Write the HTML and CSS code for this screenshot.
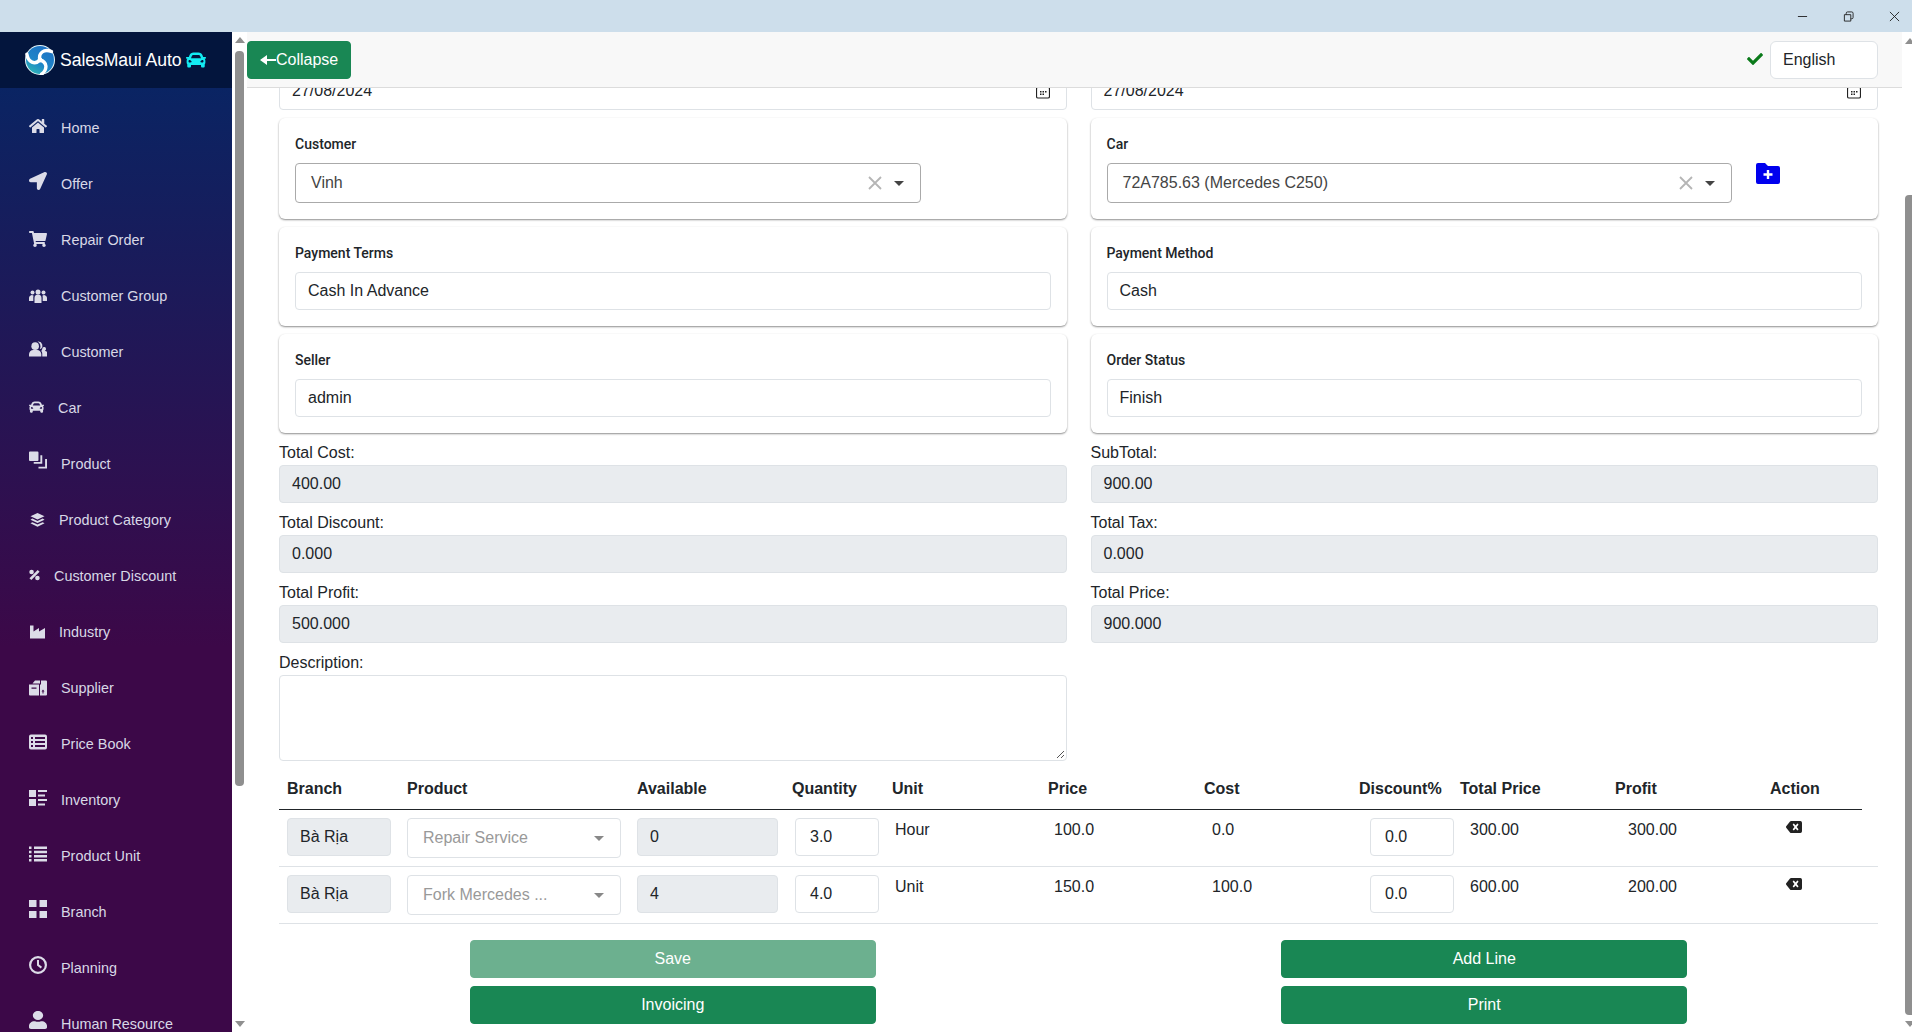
FILE: index.html
```html
<!DOCTYPE html>
<html lang="en">
<head>
<meta charset="utf-8">
<title>SalesMaui Auto</title>
<link rel="stylesheet" href="styles.css">
</head>
<body>
<div class="titlebar">
  <svg class="win-ic" viewBox="0 0 12 12"><path d="M1 6h10" /></svg>
  <svg class="win-ic" viewBox="0 0 12 12"><path d="M1.500 4h7v7h-7zM3.500 4V2.500a1.500 1.500 0 0 1 1.500-1.500h4.500a1.500 1.500 0 0 1 1.500 1.500V7a1.500 1.500 0 0 1-1.500 1.500H8.500"/></svg>
  <svg class="win-ic" viewBox="0 0 12 12"><path d="M1 1l10 10M11 1L1 11"/></svg>
</div>
<div class="app">
  <aside class="sidebar">
    <div class="brand">
      <svg class="logo" viewBox="0 0 30 30">
        <defs><linearGradient id="lg" x1="0.800" y1="0" x2="0.200" y2="1"><stop offset="0" stop-color="#1d6fc4"/><stop offset=".6" stop-color="#1f86c8"/><stop offset="1" stop-color="#2fb7b4"/></linearGradient></defs>
        <circle cx="15" cy="15" r="15" fill="#e6f4f8"/>
        <circle cx="15" cy="15" r="14" fill="url(#lg)"/>
        <g class="logo-arms">
          <path d="M15 15C13 8 19 3.500 26.500 6.500"/>
          <path d="M15 15C13 8 19 3.500 26.500 6.500" transform="rotate(120 15 15)"/>
          <path d="M15 15C13 8 19 3.500 26.500 6.500" transform="rotate(240 15 15)"/>
        </g>
        <circle cx="15" cy="15" r="2.400" fill="#fff"/>
      </svg>
      <span class="brand-name">SalesMaui Auto</span>
      <svg class="brand-car" viewBox="0 0 512 512"><path d="M499.990 176h-59.870l-16.640-41.600C406.380 91.630 365.570 64 319.500 64h-127c-46.060 0-86.880 27.630-103.990 70.400L71.870 176H12.010C4.200 176-1.530 183.340.37 190.910l6 24C7.700 220.250 12.500 224 18.010 224h20.070C24.650 235.730 16 252.780 16 272v48c0 16.120 6.160 30.670 16 41.930V416c0 17.670 14.330 32 32 32h32c17.670 0 32-14.330 32-32v-32h256v32c0 17.670 14.330 32 32 32h32c17.670 0 32-14.330 32-32v-54.070c9.840-11.250 16-25.800 16-41.930v-48c0-19.220-8.650-36.270-22.070-48H494c5.510 0 10.310-3.750 11.640-9.090l6-24c1.890-7.570-3.840-14.910-11.650-14.910zm-352.060-17.830c7.290-18.220 24.940-30.170 44.570-30.170h127c19.630 0 37.280 11.950 44.570 30.170L384 208H128l19.930-49.830zM96 319.800c-19.200 0-32-12.760-32-31.900S76.800 256 96 256s48 28.710 48 47.850-28.800 15.950-48 15.950zm320 0c-19.200 0-48 3.190-48-15.950S396.800 256 416 256s32 12.760 32 31.900-12.800 31.900-32 31.900z"/></svg>
    </div>
    <nav class="nav">
      <a class="nav-item"><svg class="ic" viewBox="0 0 576 512"><path d="M280.370 148.260L96 300.110V464a16 16 0 0 0 16 16l112.060-.29a16 16 0 0 0 15.920-16V368a16 16 0 0 1 16-16h64a16 16 0 0 1 16 16v95.640a16 16 0 0 0 16 16.050L464 480a16 16 0 0 0 16-16V300L295.670 148.260a12.190 12.190 0 0 0-15.300 0zM571.600 251.470L488 182.560V44.050a12 12 0 0 0-12-12h-56a12 12 0 0 0-12 12v72.610L318.470 43a48 48 0 0 0-61 0L4.340 251.470a12 12 0 0 0-1.600 16.900l25.500 31A12 12 0 0 0 45.150 301l235.220-193.740a12.190 12.190 0 0 1 15.300 0L530.900 301a12 12 0 0 0 16.900-1.600l25.500-31a12 12 0 0 0-1.700-16.930z"/></svg><span>Home</span></a>
      <a class="nav-item"><svg class="ic lift3" viewBox="0 0 512 512"><path d="M444.520 3.520L28.740 195.420c-47.970 22.390-31.980 92.750 19.190 92.750h175.910v175.910c0 51.170 70.360 67.170 92.750 19.190l191.900-415.780c15.990-38.390-25.590-79.970-63.970-63.970z"/></svg><span>Offer</span></a>
      <a class="nav-item"><svg class="ic lift1" viewBox="0 0 576 512"><path d="M528.120 301.319l47.273-208C578.806 78.301 567.391 64 551.990 64H159.208l-9.166-44.810C147.758 8.021 137.930 0 126.529 0H24C10.745 0 0 10.745 0 24v16c0 13.255 10.745 24 24 24h69.883l70.248 343.435C147.325 417.100 136 435.222 136 456c0 30.928 25.072 56 56 56s56-25.072 56-56c0-15.674-6.447-29.835-16.824-40h209.647C430.447 426.165 424 440.326 424 456c0 30.928 25.072 56 56 56s56-25.072 56-56c0-22.172-12.888-41.332-31.579-50.405l5.517-24.276c3.413-15.018-8.002-29.319-23.403-29.319H218.117l-6.545-32h293.145c11.206 0 20.920-7.754 23.403-18.681z"/></svg><span>Repair Order</span></a>
      <a class="nav-item"><svg class="ic lift0" viewBox="0 0 18 14"><circle cx="9" cy="3" r="2.500"/><circle cx="3.500" cy="3.500" r="2"/><circle cx="14.500" cy="3.500" r="2"/><path d="M5.500 14V9a3.500 3.500 0 0 1 7 0v5zM0 12V9a2.800 2.800 0 0 1 4.600-2.200A5 5 0 0 0 4.300 9v3zM18 12V9a2.800 2.800 0 0 0-4.600-2.200 5 5 0 0 1 .3 2.200v3z"/></svg><span>Customer Group</span></a>
      <a class="nav-item"><svg class="ic lift3" viewBox="0 0 19 18"><circle cx="6.500" cy="6" r="4"/><path d="M0 17v-2.500A4.500 4.500 0 0 1 4.500 10h4a4.500 4.500 0 0 1 4.500 4.500V17z"/><path d="M10 1a4.500 4.500 0 0 1 2.500 8l-1-.5A5.500 5.500 0 0 0 9 1.100z"/><path d="M14 9a2 2 0 1 1 2.800 1.800l2.200 1V17h-5v-3a5 5 0 0 0-1-3z"/></svg><span>Customer</span></a>
      <a class="nav-item"><svg class="ic w15 lift1" viewBox="0 0 512 512"><path d="M499.990 176h-59.870l-16.640-41.600C406.380 91.630 365.570 64 319.500 64h-127c-46.060 0-86.880 27.630-103.990 70.400L71.870 176H12.010C4.200 176-1.530 183.340.37 190.910l6 24C7.700 220.250 12.500 224 18.010 224h20.070C24.650 235.730 16 252.780 16 272v48c0 16.120 6.160 30.670 16 41.930V416c0 17.670 14.330 32 32 32h32c17.670 0 32-14.330 32-32v-32h256v32c0 17.670 14.330 32 32 32h32c17.670 0 32-14.330 32-32v-54.070c9.840-11.250 16-25.800 16-41.930v-48c0-19.220-8.650-36.270-22.070-48H494c5.510 0 10.310-3.750 11.640-9.090l6-24c1.890-7.570-3.840-14.910-11.650-14.910zm-352.060-17.830c7.290-18.220 24.940-30.170 44.570-30.170h127c19.630 0 37.280 11.950 44.570 30.170L384 208H128l19.930-49.830zM96 319.800c-19.200 0-32-12.760-32-31.900S76.800 256 96 256s48 28.710 48 47.850-28.800 15.950-48 15.950zm320 0c-19.200 0-48 3.190-48-15.950S396.800 256 416 256s32 12.760 32 31.900-12.800 31.900-32 31.900z"/></svg><span>Car</span></a>
      <a class="nav-item"><svg class="ic lift4" viewBox="0 0 19 18"><path d="M1 0h8a1 1 0 0 1 1 1v8a1 1 0 0 1-1 1H1a1 1 0 0 1-1-1V1a1 1 0 0 1 1-1zM12 4h2v9H5v-2h7zM17 8h2v10H10v-2h7z"/></svg><span>Product</span></a>
      <a class="nav-item nudge1"><svg class="ic w15 lift0" viewBox="0 0 16 15"><path d="M8 0l7.500 3.500L8 7 .5 3.500zM2.500 6L8 8.500 13.500 6l2 1.200L8 10.800.5 7.200zM2.500 9.800L8 12.300l5.500-2.500 2 1.200L8 14.600.5 11z"/></svg><span>Product Category</span></a>
      <a class="nav-item"><svg class="ic w11 lift1" viewBox="0 0 12 12"><path d="M9.500 .5L11.500 2.500 2.500 11.500 .5 9.500z"/><circle cx="2.800" cy="2.800" r="2.500"/><circle cx="9.200" cy="9.200" r="2.500"/></svg><span>Customer Discount</span></a>
      <a class="nav-item nudge1"><svg class="ic w15 lift0" viewBox="0 0 15 13"><path d="M0 0h3.500v6L9 2.500V6l6-3.500V13H0z"/></svg><span>Industry</span></a>
      <a class="nav-item"><svg class="ic lift0" viewBox="0 0 18 15"><path d="M6 0l5-.1V3H3.500zM12 0h5a1 1 0 0 1 1 1v13a1 1 0 0 1-1 1H11V4h1zM0 4h10v11H1a1 1 0 0 1-1-1zM2.500 7v1.200h5V7zM14 9l-1.500 2h1v2h1v-2h1z"/></svg><span>Supplier</span></a>
      <a class="nav-item"><svg class="ic h16" viewBox="0 0 18 15"><path fill-rule="evenodd" d="M2 0h14a2 2 0 0 1 2 2v11a2 2 0 0 1-2 2H2a2 2 0 0 1-2-2V2a2 2 0 0 1 2-2zM2 2.500v2h2v-2zM6 2.500v2h10v-2zM2 6.500v2h2v-2zM6 6.500v2h10v-2zM2 10.500v2h2v-2zM6 10.500v2h10v-2z"/></svg><span>Price Book</span></a>
      <a class="nav-item"><svg class="ic h16" viewBox="0 0 18 16"><path d="M0 0h7v7H0zM0 9h7v7H0zM9 0h9v2H9zM9 4.500h7v2H9zM9 9h9v2H9zM9 13.500h7v2H9z"/></svg><span>Inventory</span></a>
      <a class="nav-item"><svg class="ic h16" viewBox="0 0 18 16"><path d="M0 .5h2.500v2.500H0zM5 .5h13v2.500H5zM0 4.700h2.500v2.500H0zM5 4.700h13v2.500H5zM0 8.900h2.500v2.500H0zM5 8.900h13v2.500H5zM0 13.100h2.500v2.500H0zM5 13.100h13v2.500H5z"/></svg><span>Product Unit</span></a>
      <a class="nav-item"><svg class="ic lift3" viewBox="0 0 18 18"><path d="M0 0h7.500v7H0zM10.500 0H18v7h-7.500zM0 11h7.500v7H0zM10.500 11H18v7h-7.500z"/></svg><span>Branch</span></a>
      <a class="nav-item"><svg class="ic lift3" viewBox="0 0 18 18"><path fill-rule="evenodd" d="M9 0a9 9 0 1 1 0 18A9 9 0 0 1 9 0zm0 2.200a6.800 6.800 0 1 0 0 13.600A6.800 6.800 0 0 0 9 2.200z"/><path d="M8 4h2v4.600l3 2.200-1.200 1.600L8 9.600z"/></svg><span>Planning</span></a>
      <a class="nav-item"><svg class="ic lift4" viewBox="0 0 448 512" preserveAspectRatio="none"><path d="M224 256c70.700 0 128-57.300 128-128S294.700 0 224 0 96 57.300 96 128s57.300 128 128 128zm89.600 32h-16.700c-22.200 10.200-46.900 16-72.900 16s-50.600-5.800-72.900-16h-16.700C60.200 288 0 348.200 0 422.400V464c0 26.500 21.500 48 48 48h352c26.500 0 48-21.500 48-48v-41.600c0-74.200-60.200-134.400-134.400-134.400z"/></svg><span>Human Resource</span></a>
    </nav>
  </aside>
  <div class="scrollbar side-scrollbar">
    <i class="arrow-up"></i><i class="thumb"></i><i class="arrow-down"></i>
  </div>
  <main class="main">
    <header class="navbar">
      <button class="btn collapse"><svg class="larr" viewBox="0 0 16 12"><path d="M0 6l7-5v4h9v2H7v4z"/></svg>Collapse</button>
      <div class="nav-right">
        <svg class="check" viewBox="0 0 512 512"><path d="M173.898 439.404l-166.400-166.400c-9.997-9.997-9.997-26.206 0-36.204l36.203-36.204c9.997-9.998 26.207-9.998 36.204 0L192 312.690 432.095 72.596c9.997-9.997 26.207-9.997 36.204 0l36.203 36.204c9.997 9.997 9.997 26.206 0 36.204l-294.400 294.401c-9.998 9.997-26.207 9.997-36.204-.001z"/></svg>
        <div class="lang">English</div>
      </div>
    </header>
    <div class="content">
      <div class="form-grid">
        <div class="field date">27/08/2024<svg class="cal" viewBox="0 0 14 14"><path d="M1.500 2.500h11a1 1 0 0 1 1 1v8a1.500 1.500 0 0 1-1.500 1.500H2A1.500 1.500 0 0 1 .5 11.500v-8a1 1 0 0 1 1-1z" fill="none" stroke="#222" stroke-width="1.200"/><path d="M4 6h1.500v1.500H4zM6.500 6H8v1.500H6.500zM9 6h1.500v1.500H9zM4 8.500h1.500V10H4zM6.500 8.500H8V10H6.500z" fill="#222"/></svg></div>
        <div class="field date">27/08/2024<svg class="cal" viewBox="0 0 14 14"><path d="M1.500 2.500h11a1 1 0 0 1 1 1v8a1.500 1.500 0 0 1-1.500 1.500H2A1.500 1.500 0 0 1 .5 11.500v-8a1 1 0 0 1 1-1z" fill="none" stroke="#222" stroke-width="1.200"/><path d="M4 6h1.500v1.500H4zM6.500 6H8v1.500H6.500zM9 6h1.500v1.500H9zM4 8.500h1.500V10H4zM6.500 8.500H8V10H6.500z" fill="#222"/></svg></div>

        <section class="card">
          <div class="card-label">Customer</div>
          <div class="select2"><span>Vinh</span><svg class="clear" viewBox="0 0 14 14"><path d="M1 1l12 12M13 1L1 13"/></svg><i class="caret"></i></div>
        </section>
        <section class="card">
          <div class="card-label">Car</div>
          <div class="select-row">
            <div class="select2"><span>72A785.63 (Mercedes C250)</span><svg class="clear" viewBox="0 0 14 14"><path d="M1 1l12 12M13 1L1 13"/></svg><i class="caret"></i></div>
            <svg class="folder" viewBox="0 0 24 21"><path fill-rule="evenodd" d="M2 0h7l3 3h10a2 2 0 0 1 2 2v14a2 2 0 0 1-2 2H2a2 2 0 0 1-2-2V2a2 2 0 0 1 2-2z" fill="#0000ee"/><path d="M10.800 7h2.400v3.300h3.300v2.400h-3.300V16h-2.400v-3.300H7.500v-2.400h3.300z" fill="#fff"/></svg>
          </div>
        </section>

        <section class="card"><div class="card-label">Payment Terms</div><div class="field">Cash In Advance</div></section>
        <section class="card"><div class="card-label">Payment Method</div><div class="field">Cash</div></section>
        <section class="card"><div class="card-label">Seller</div><div class="field">admin</div></section>
        <section class="card"><div class="card-label">Order Status</div><div class="field">Finish</div></section>

        <div class="group"><label>Total Cost:</label><div class="field ro">400.00</div></div>
        <div class="group"><label>SubTotal:</label><div class="field ro">900.00</div></div>
        <div class="group"><label>Total Discount:</label><div class="field ro">0.000</div></div>
        <div class="group"><label>Total Tax:</label><div class="field ro">0.000</div></div>
        <div class="group"><label>Total Profit:</label><div class="field ro">500.000</div></div>
        <div class="group"><label>Total Price:</label><div class="field ro">900.000</div></div>
        <div class="group"><label>Description:</label><div class="textarea"><svg class="grip" viewBox="0 0 9 9"><path d="M8 1L1 8M8 5L5 8"/></svg></div></div>
      </div>

      <div class="lines">
        <div class="line-head line-cols">
          <div>Branch</div><div>Product</div><div>Available</div><div>Quantity</div><div>Unit</div><div>Price</div><div class="h-cost">Cost</div><div>Discount%</div><div>Total Price</div><div>Profit</div><div>Action</div>
        </div>
        <div class="line-row line-cols">
          <div class="c-branch"><div class="field ro">Bà Rịa</div></div>
          <div class="c-product"><div class="pick"><span>Repair Service</span><i class="caret light"></i></div></div>
          <div class="c-avail"><div class="field ro">0</div></div>
          <div class="c-qty"><div class="field">3.0</div></div>
          <div class="c-unit">Hour</div>
          <div class="c-price">100.0</div>
          <div class="c-cost">0.0</div>
          <div class="c-disc"><div class="field">0.0</div></div>
          <div class="c-total">300.00</div>
          <div class="c-profit">300.00</div>
          <div class="c-action"><svg class="del" viewBox="0 0 640 512" preserveAspectRatio="none"><path d="M576 64H205.260A63.970 63.970 0 0 0 160 82.750L9.370 233.370c-12.500 12.500-12.500 32.760 0 45.250L160 429.250c12 12 28.280 18.750 45.250 18.750H576c35.350 0 64-28.650 64-64V128c0-35.350-28.650-64-64-64zm-84.690 254.060c6.250 6.250 6.250 16.380 0 22.630l-22.620 22.620c-6.250 6.250-16.380 6.250-22.630 0L384 301.250l-62.060 62.060c-6.250 6.250-16.380 6.250-22.630 0l-22.620-22.620c-6.250-6.250-6.250-16.380 0-22.630L338.750 256l-62.060-62.060c-6.250-6.250-6.250-16.380 0-22.630l22.620-22.620c6.250-6.250 16.380-6.250 22.630 0L384 210.750l62.060-62.060c6.250-6.250 16.380-6.250 22.630 0l22.620 22.620c6.250 6.250 6.250 16.380 0 22.630L429.250 256l62.060 62.060z"/></svg></div>
        </div>
        <div class="line-row line-cols">
          <div class="c-branch"><div class="field ro">Bà Rịa</div></div>
          <div class="c-product"><div class="pick"><span>Fork Mercedes ...</span><i class="caret light"></i></div></div>
          <div class="c-avail"><div class="field ro">4</div></div>
          <div class="c-qty"><div class="field">4.0</div></div>
          <div class="c-unit">Unit</div>
          <div class="c-price">150.0</div>
          <div class="c-cost">100.0</div>
          <div class="c-disc"><div class="field">0.0</div></div>
          <div class="c-total">600.00</div>
          <div class="c-profit">200.00</div>
          <div class="c-action"><svg class="del" viewBox="0 0 640 512" preserveAspectRatio="none"><path d="M576 64H205.260A63.970 63.970 0 0 0 160 82.750L9.370 233.370c-12.500 12.500-12.500 32.760 0 45.250L160 429.250c12 12 28.280 18.750 45.250 18.750H576c35.350 0 64-28.650 64-64V128c0-35.350-28.650-64-64-64zm-84.690 254.060c6.250 6.250 6.250 16.380 0 22.630l-22.620 22.620c-6.250 6.250-16.380 6.250-22.630 0L384 301.250l-62.060 62.060c-6.250 6.250-16.380 6.250-22.630 0l-22.620-22.620c-6.250-6.250-6.250-16.380 0-22.630L338.750 256l-62.060-62.060c-6.250-6.250-6.250-16.380 0-22.630l22.620-22.620c6.250-6.250 16.380-6.250 22.630 0L384 210.750l62.060-62.060c6.250-6.250 16.380-6.250 22.630 0l22.620 22.620c6.250 6.250 6.250 16.380 0 22.630L429.250 256l62.060 62.060z"/></svg></div>
        </div>
      </div>

      <div class="actions">
        <div class="action-col"><button class="btn wide dim">Save</button><button class="btn wide">Invoicing</button></div>
        <div class="action-col"><button class="btn wide">Add Line</button><button class="btn wide">Print</button></div>
      </div>
    </div>
  </main>
  <div class="scrollbar page-scrollbar">
    <i class="arrow-up"></i><i class="spacer"></i><i class="thumb"></i><i class="arrow-down"></i>
  </div>
</div>
</body>
</html>
```
FILE: styles.css
```css
* { box-sizing: border-box; }
html, body { margin: 0; height: 100%; }
body {
  display: flex;
  flex-direction: column;
  height: 1032px;
  overflow: hidden;
  font-family: "Liberation Sans", Arial, sans-serif;
  font-size: 16px;
  line-height: 24px;
  color: #212529;
  background: #fff;
}

/* window frame */
.titlebar {
  flex: 0 0 32px;
  display: flex;
  justify-content: flex-end;
  align-items: center;
  gap: 35px;
  padding-right: 12px;
  background: #cddeeb;
}
.win-ic { width: 11px; height: 11px; fill: none; stroke: #222; stroke-width: 1; }

.app { flex: 1; display: flex; min-height: 0; }

/* sidebar */
.sidebar {
  flex: 0 0 232px;
  display: flex;
  flex-direction: column;
  overflow: hidden;
}
.brand {
  flex: 0 0 56px;
  display: flex;
  align-items: center;
  padding-left: 25px;
  background: #03153d;
  color: #fff;
}
.logo { width: 30px; height: 30px; margin-right: 5px; }
.logo-arms path { fill: none; stroke: #fff; stroke-width: 3.400; stroke-linecap: round; }
.brand-name { font-size: 17.6px; white-space: nowrap; letter-spacing: -.05px; }
.brand-car { width: 20px; height: 20px; margin-left: 4px; fill: #13ebf2; }
.nav {
  flex: 1;
  padding-top: 12px;
  background: linear-gradient(#0a2463 0, #3c0848 58%, #3c0848 100%);
}
.nav-item {
  display: flex;
  align-items: center;
  gap: 14px;
  height: 56px;
  padding-left: 29px;
  font-size: 14.4px;
  color: #d8d8e6;
}
.nav-item span { white-space: nowrap; }
.nudge1 .ic { margin-left: 1px; }
.ic { width: 18px; height: 18px; fill: #dcdce8; margin-bottom: 4px; flex: none; }
.ic.w15 { width: 15px; }
.ic.w11 { width: 11px; }
.ic.h16 { height: 16px; }
.ic.lift0 { margin-bottom: 0; }
.ic.lift1 { margin-bottom: 2px; }
.ic.lift3 { margin-bottom: 6px; }
.ic.lift4 { margin-bottom: 8px; }

/* scrollbars */
.scrollbar {
  display: flex;
  flex-direction: column;
  background: #fff;
  overflow: hidden;
  min-width: 0;
}
.side-scrollbar { flex: 0 0 15px; padding: 5px 3px 5px 3px; align-items: center; }
.page-scrollbar { flex: 0 0 10px; padding: 6px 0 5px 3px; align-items: flex-start; }
.scrollbar i { display: block; flex: none; }
.side-scrollbar .thumb { width: 9px; height: 735px; margin: 8px 0 auto; background: #8f8f8f; border-radius: 4px; }
.page-scrollbar .spacer { height: 151px; }
.page-scrollbar .thumb { width: 7px; height: 820px; background: #8f8f8f; border-radius: 4px 0 0 4px; }
.arrow-up { width: 0; height: 0; border: 5px solid transparent; border-top: 0; border-bottom: 6px solid #8f8f8f; }
.arrow-down { width: 0; height: 0; border: 5px solid transparent; border-bottom: 0; border-top: 6px solid #8f8f8f; margin-top: auto; }

/* main */
.main { flex: 1; min-width: 0; display: flex; flex-direction: column; position: relative; }
.navbar {
  flex: 0 0 56px;
  display: flex;
  justify-content: space-between;
  align-items: flex-start;
  padding: 9px 24px 0 0;
  background: #f8f8f8;
  border-bottom: 1px solid #dcdcdc;
  position: relative;
  z-index: 2;
}
.nav-right { display: flex; align-items: center; gap: 7px; }
.check { width: 16px; height: 16px; fill: #0a7a1a; margin-bottom: 2px; }
.lang {
  width: 108px;
  height: 38px;
  padding: 6px 12px;
  background: #fff;
  border: 1px solid #dee2e6;
  border-radius: 6px;
}
.btn {
  height: 38px;
  padding: 0 12px;
  border: 1px solid #198754;
  border-radius: 4px;
  background: #198754;
  color: #fff;
  font: inherit;
  text-align: center;
}
.collapse { display: flex; align-items: center; gap: 0; width: 104px; padding: 0 0 0 12px; white-space: nowrap; }
.larr { width: 16px; height: 12px; fill: #fff; flex: none; }
.btn.wide { display: block; width: 406px; }
.btn.dim { background: #6cb08f; border-color: #6cb08f; }

.content { flex: 1; min-height: 0; overflow: hidden; padding: 0 24px 0 32px; }
.form-grid {
  display: grid;
  grid-template-columns: 1fr 1fr;
  column-gap: 24px;
  row-gap: 8px;
  margin-top: -16px;
}
.field {
  position: relative;
  height: 38px;
  padding: 6px 12px;
  background: #fff;
  border: 1px solid #dee2e6;
  border-radius: 4px;
}
.field.ro { background: #e9ecef; }
.cal { position: absolute; right: 16px; top: 12px; width: 14px; height: 14px; }

.card {
  padding: 16px;
  background: #fff;
  border-radius: 6px;
  box-shadow: 0 1px 2px 0 rgba(0,0,0,.45);
}
.card-label {
  font-family: Roboto, "Liberation Sans", sans-serif;
  font-size: 14px;
  font-weight: 500;
  line-height: 21px;
  margin-bottom: 8px;
}
.select-row { display: flex; align-items: flex-start; gap: 24px; }
.select2 {
  display: flex;
  align-items: center;
  width: 626px;
  height: 40px;
  padding: 0 16px 0 15px;
  border: 1px solid #aaa;
  border-radius: 4px;
  color: #444;
  flex: none;
}
.select-row .select2 { width: 625px; }
.select2 span { flex: 1; }
.clear { width: 14px; height: 14px; fill: none; stroke: #b5b5b5; stroke-width: 1.800; margin-right: 12px; }
.caret { width: 0; height: 0; border: 5px solid transparent; border-bottom: 0; border-top: 5px solid #444; }
.caret.light { border-top-color: #888; }
.folder { width: 24px; height: 21px; flex: none; }

.group label { display: block; height: 24px; }
.textarea {
  position: relative;
  height: 86px;
  background: #fff;
  border: 1px solid #dee2e6;
  border-radius: 4px;
}
.grip { position: absolute; right: 1px; bottom: 1px; width: 9px; height: 9px; fill: none; stroke: #555; stroke-width: 1; }

/* order lines */
.lines { margin-top: 8px; }
.line-cols {
  display: grid;
  grid-template-columns: 120px 230px 155px 100px 156px 155px 156px 101px 155px 155px 1fr;
}
.line-head {
  margin-right: 16px;
  height: 41px;
  padding-top: 8px;
  font-weight: 700;
  border-bottom: 1.5px solid #212529;
}
.line-head > div { padding-left: 8px; white-space: nowrap; }
.line-head > .h-cost { padding-left: 9px; }
.line-row {
  height: 57px;
  padding: 8px 0;
  border-bottom: 1px solid #dee2e6;
}
.c-branch, .c-product { padding: 0 8px; }
.c-avail { padding: 0 6px 0 8px; }
.c-qty { padding: 0 5px 0 11px; }
.c-unit { padding-left: 11px; }
.c-price { padding-left: 14px; }
.c-cost { padding-left: 17px; }
.c-disc { padding: 0 0 0 19px; }
.c-disc .field { width: 84px; }
.c-total { padding-left: 18px; }
.c-profit { padding-left: 21px; }
.c-action { padding-left: 24px; }
.c-qty .field, .c-disc .field { padding-left: 14px; }
.pick {
  display: flex;
  align-items: center;
  justify-content: space-between;
  height: 40px;
  padding: 0 16px 0 15px;
  border: 1px solid #dee2e6;
  border-radius: 4px;
  color: #999;
}
.del { display: block; width: 16px; height: 16px; fill: #222; margin-top: 1px; }

.actions {
  display: grid;
  grid-template-columns: 1fr 1fr;
  column-gap: 24px;
  margin-top: 16px;
}
.action-col { display: flex; flex-direction: column; align-items: center; gap: 8px; }
```
